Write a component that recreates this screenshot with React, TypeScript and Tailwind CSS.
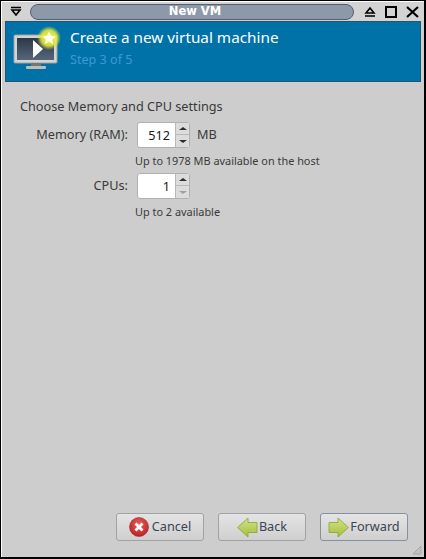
const FONT = "font-['Noto_Sans','Open_Sans',sans-serif]";

function MonitorIcon() {
  return (
    <svg width="48" height="46" viewBox="0 0 48 46">
      <defs>
        <radialGradient id="glow">
          <stop offset="0%" stopColor="#f6f65a" stopOpacity="1" />
          <stop offset="65%" stopColor="#e4e83a" stopOpacity="0.9" />
          <stop offset="100%" stopColor="#d8e030" stopOpacity="0" />
        </radialGradient>
        <linearGradient id="screen" x1="0" y1="0" x2="0" y2="1">
          <stop offset="0%" stopColor="#2c3848" />
          <stop offset="100%" stopColor="#56667a" />
        </linearGradient>
      </defs>
      <rect x="1" y="10" width="43" height="28" rx="1" fill="#d4d4d2" stroke="#a0a09c" />
      <rect x="4" y="13" width="37" height="22" fill="url(#screen)" />
      <path d="M20 15 L20 33 L30 24 Z" fill="#ffffff" />
      <rect x="18" y="38" width="10" height="3" fill="#77776f" />
      <rect x="13" y="41" width="20" height="3" rx="1" fill="#bcbcb8" />
      <circle cx="36" cy="13" r="12" fill="url(#glow)" />
      <path
        d="M36 6.5 L38 10.9 L42.8 11.4 L39.2 14.6 L40.2 19.2 L36 16.8 L31.8 19.2 L32.8 14.6 L29.2 11.4 L34 10.9 Z"
        fill="#fffff0"
      />
    </svg>
  );
}

function CancelIcon() {
  return (
    <svg width="20" height="20" viewBox="0 0 20 20" className="mr-[2px]">
      <defs>
        <radialGradient id="red" cx="50%" cy="35%" r="70%">
          <stop offset="0%" stopColor="#e8605c" />
          <stop offset="100%" stopColor="#b81c22" />
        </radialGradient>
      </defs>
      <circle cx="10" cy="10" r="9.5" fill="url(#red)" stroke="#a3262a" strokeWidth="0.6" />
      <path d="M6.5 6.5 L13.5 13.5 M13.5 6.5 L6.5 13.5" stroke="#ffffff" strokeWidth="2.8" />
    </svg>
  );
}

function ArrowIcon({ flip }: { flip?: boolean }) {
  return (
    <svg width="21" height="21" viewBox="0 0 21 21" className={flip ? "-scale-x-100" : ""}>
      <defs>
        <linearGradient id={flip ? "arrowB" : "arrowF"} x1="0" y1="0" x2="0" y2="1">
          <stop offset="0%" stopColor="#d5e28a" />
          <stop offset="100%" stopColor="#a2bf38" />
        </linearGradient>
      </defs>
      <path
        d="M1 5.5 L10 5.5 L10 1 L20.5 10.5 L10 20 L10 15.5 L1 15.5 Z"
        fill={`url(#${flip ? "arrowB" : "arrowF"})`}
        stroke="#8aa13c"
        strokeWidth="0.8"
      />
    </svg>
  );
}

function Spinner({ value, downDisabled }: { value: string; downDisabled?: boolean }) {
  return (
    <div className="ml-[2px] flex h-[26px] w-[53px] rounded-[3px] border border-[#b0b0b0] bg-white">
      <span className="flex-1 pr-[5px] text-right text-[12.7px] leading-[24px] text-[#1a1a1a]">{value}</span>
      <div className="flex w-[14px] flex-col border-l border-[#b8b8b8] bg-[#dcdcdc]">
        <div className="flex h-[12px] items-center justify-center border-b border-[#b8b8b8]">
          <div className="h-0 w-0 border-x-[4px] border-b-[3px] border-x-transparent border-b-[#2e2e2e]" />
        </div>
        <div className="flex flex-1 items-center justify-center">
          <div
            className={`h-0 w-0 border-x-[4px] border-t-[3px] border-x-transparent ${
              downDisabled ? "border-t-[#a0a0a0]" : "border-t-[#2e2e2e]"
            }`}
          />
        </div>
      </div>
    </div>
  );
}

function FooterButton({
  label,
  icon,
  focused,
}: {
  label: string;
  icon: React.ReactNode;
  focused?: boolean;
}) {
  return (
    <button
      type="button"
      className={`flex h-[28px] w-[88px] items-center justify-center gap-[1px] rounded-[3px] border bg-gradient-to-b from-[#e4e4e4] to-[#cfcfcf] text-[12.7px] text-[#3a4654] ${
        focused ? "border-[#8492a0]" : "border-[#a2a2a2]"
      }`}
    >
      {icon}
      <span>{label}</span>
    </button>
  );
}

export default function App() {
  return (
    <div
      className={`relative flex h-[559px] w-[426px] flex-col border-b-2 border-l border-r-2 border-t border-black bg-[#cdcdcd] pl-px pt-px shadow-[inset_1px_1px_0_#ffffff] ${FONT}`}
    >
      <div className="flex h-[19px] items-center bg-[#d3d3d3] pl-[8px] pr-[4px]">
        <svg width="12" height="12" viewBox="0 0 12 12" className="shrink-0">
          <path d="M1 1.5 H11 M2 4 H10 L6 9 Z" stroke="#000" strokeWidth="1.6" fill="none" />
        </svg>
        <div className="ml-[8px] flex h-[16px] w-[324px] items-center justify-center rounded-[8px] border border-[#55606c] bg-[#8d99aa] pl-[6px] font-['DejaVu_Sans',sans-serif] text-[11.5px] font-bold text-white">
          New VM
        </div>
        <div className="ml-[10px] flex items-center gap-[9px]">
          <svg width="12" height="12" viewBox="0 0 12 12">
            <path d="M1 10 H11 M2 7 H10 L6 2 Z" stroke="#000" strokeWidth="1.6" fill="none" />
          </svg>
          <div className="h-[12px] w-[12px] border-2 border-black" />
          <svg width="13" height="12" viewBox="0 0 13 12">
            <path d="M1 1 L12 11 M12 1 L1 11" stroke="#000" strokeWidth="2.2" />
          </svg>
        </div>
      </div>

      <header className="mx-[3px] flex h-[61px] items-start border border-[#25546f] bg-[#0072a8]">
        <div className="ml-[7px] mt-[3px] shrink-0">
          <MonitorIcon />
        </div>
        <div className="ml-[9px] mt-[3px]">
          <h1 className="text-[15.3px] leading-[24px] text-white">Create a new virtual machine</h1>
          <p className="mt-[2px] text-[12.6px] leading-[18px] text-[#3c9ad2]">Step 3 of 5</p>
        </div>
      </header>

      <main className="flex-1 px-[18px] pt-[15px] text-[#3a3a3a]">
        <p className="text-[12.7px] leading-[18px]">Choose Memory and CPU settings</p>
        <div className="mt-[7px] grid grid-cols-[108px_auto] items-center gap-x-[7px] text-[12.7px]">
          <span className="text-right">Memory (RAM):</span>
          <div className="flex items-center gap-[7px]">
            <Spinner value="512" />
            <span>MB</span>
          </div>
          <span />
          <span className="mt-[5px] text-[10.9px] leading-[16px]">Up to 1978 MB available on the host</span>
          <span className="mt-[4px] text-right">CPUs:</span>
          <div className="mt-[4px]">
            <Spinner value="1" downDisabled />
          </div>
          <span />
          <span className="mt-[5px] text-[10.9px] leading-[16px]">Up to 2 available</span>
        </div>
      </main>

      <footer className="flex justify-end gap-[14px] pb-[16px] pr-[16px]">
        <FooterButton label="Cancel" icon={<CancelIcon />} />
        <FooterButton label="Back" icon={<ArrowIcon flip />} />
        <FooterButton label="Forward" focused icon={<ArrowIcon />} />
      </footer>

      <svg width="10" height="10" viewBox="0 0 10 10" className="absolute bottom-[2px] right-[2px]">
        <path d="M9 1 L1 9 H9 Z" fill="#c2c2c2" stroke="#a8a8a8" strokeWidth="1" />
      </svg>
    </div>
  );
}
